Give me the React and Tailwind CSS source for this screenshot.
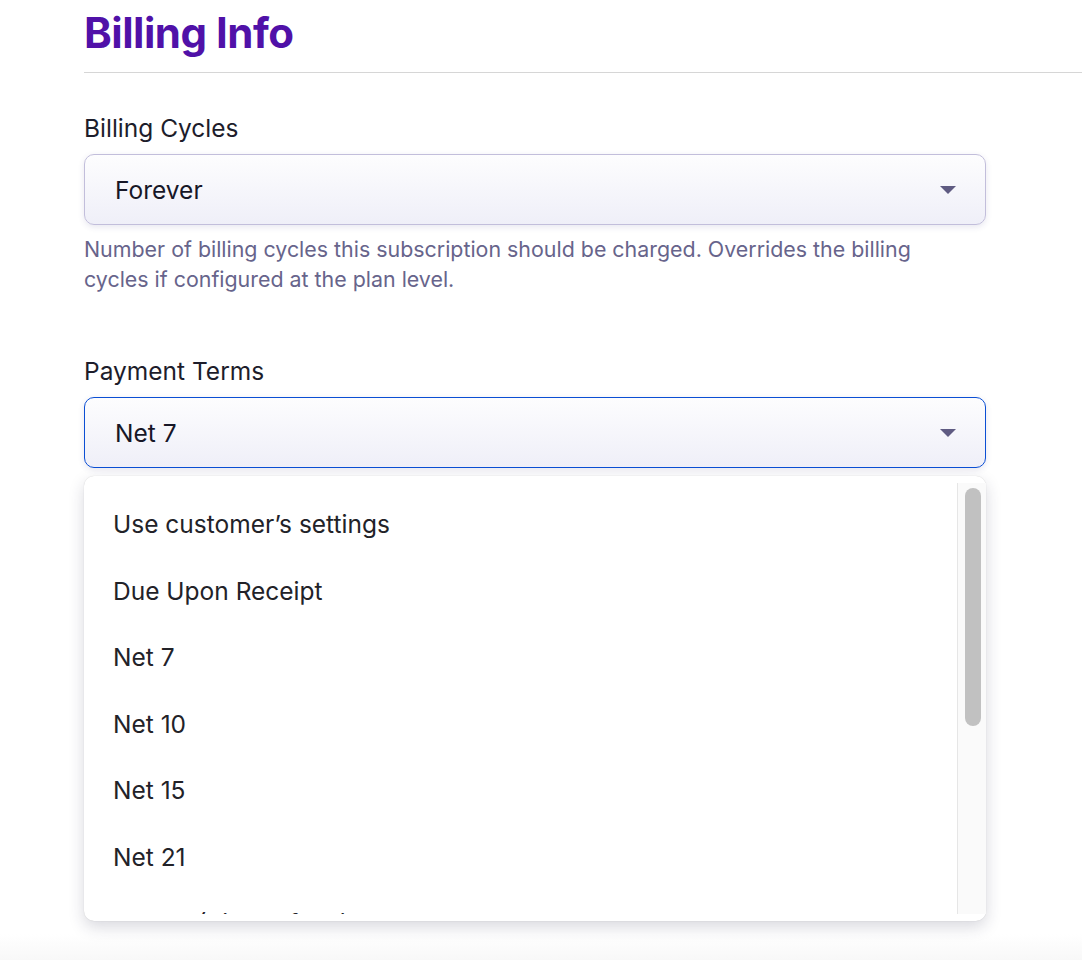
import React, { useState } from 'react';

const TERMS = [
  'Use customer\u2019s settings',
  'Due Upon Receipt',
  'Net 7',
  'Net 10',
  'Net 15',
  'Net 21',
  'Net 35 (Site Default)',
];

function Caret() {
  return (
    <svg width="16" height="8" viewBox="0 0 16 8" className="shrink-0">
      <path d="M0 0h16L8 8z" fill="#5f5b82" />
    </svg>
  );
}

function SelectBox({ value, focused }) {
  return (
    <div
      className={`h-[71px] w-full rounded-[10px] border bg-gradient-to-b from-[#fdfdfe] to-[#efeff8] pl-[30px] pr-[29px] flex items-center justify-between shadow-[0_2px_6px_rgba(60,50,120,0.12)] ${
        focused ? 'border-[#0b4fd4]' : 'border-[#c2bedb]'
      }`}
    >
      <span className="text-[24.5px] leading-[30px] text-[#171727]">{value}</span>
      <Caret />
    </div>
  );
}

export default function App() {
  const [terms] = useState('Net 7');

  return (
    <div className="h-[960px] overflow-hidden bg-white flex flex-col font-['Inter','Liberation_Sans',sans-serif]">
      <div className="flex-1 pl-[84px] pt-[8px]">
        <h1 className="text-[42px] leading-[50px] font-bold tracking-[-0.5px] text-[#5011a8]">Billing Info</h1>
        <div className="mt-[14px] h-px bg-[#d6d6d6]" />

        <div className="w-[902px]">
          {/* Billing cycles */}
          <label className="block mt-[40px] text-[24.5px] leading-[30px] text-[#1d1d2b]">Billing Cycles</label>
          <div className="mt-[11px]">
            <SelectBox value="Forever" />
          </div>
          <p className="mt-[9px] max-w-[860px] text-[21.4px] leading-[30px] text-[#67648b]">
            Number of billing cycles this subscription should be charged. Overrides the billing cycles if configured at the plan level.
          </p>

          {/* Payment terms, open */}
          <label className="block mt-[62px] text-[24.5px] leading-[30px] text-[#1d1d2b]">Payment Terms</label>
          <div className="relative mt-[11px]">
            <SelectBox value={terms} focused />

            <div className="absolute left-0 right-0 top-[79px] z-10 h-[445px] rounded-[10px] bg-white py-[7px] shadow-[0_0_1px_rgba(0,0,0,0.2),0_6px_16px_rgba(40,40,70,0.18)]">
              <div className="flex h-full overflow-hidden">
                <ul className="flex-1 overflow-hidden pt-[8px]">
                  {TERMS.map(t => (
                    <li key={t} className="h-[66.6px] flex items-center pl-[29px] text-[24.5px] text-[#222228] whitespace-nowrap">
                      {t}
                    </li>
                  ))}
                </ul>
                <div className="w-[29px] shrink-0 border-l border-[#e6e6e6] bg-[#fafafa] pl-[7px] pt-[5px]">
                  <div className="h-[238px] w-[16px] rounded-full bg-[#c1c1c1]" />
                </div>
              </div>
            </div>
          </div>

          {/* next field, sits under the open menu */}
          <div className="mt-[65px] h-[135px] rounded-[10px] border border-[#dcdae6] bg-[#fbfbfd]" />
        </div>
      </div>
      <div className="h-[26px] shrink-0 bg-gradient-to-b from-white to-[#f8f8f8]" />
    </div>
  );
}
